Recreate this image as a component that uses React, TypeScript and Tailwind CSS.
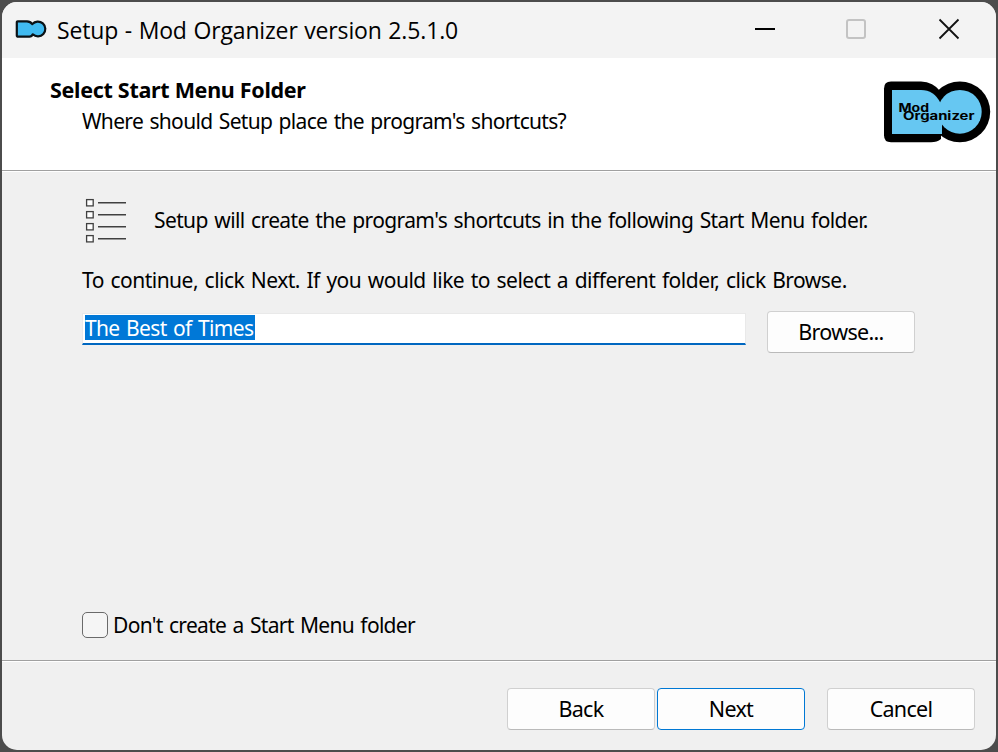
import type { ReactNode } from "react";

function WindowIcon() {
  return (
    <svg className="block" width="32" height="20" viewBox="0 0 32 20">
      <path
        d="M2.8 1.300H12Q15.300 1.400 17.300 4.100A7.400 7.400 0 1 1 17.800 14.300Q16.800 16.600 14.500 16.600H3.100Q1.800 16.600 1.800 15.500V2.400Q1.800 1.300 2.800 1.300Z"
        fill="#41bbf1"
        stroke="#0b1216"
        strokeWidth="2.200"
        strokeLinejoin="round"
      />
    </svg>
  );
}

function Logo() {
  return (
    <svg className="block" width="108" height="64" viewBox="0 0 108 64">
      <path
        d="M8 1.500H38Q50 1.500 58 12V59Q54 62.200 48 62.200H8Q1 62.200 1 55.200V8.500Q1 1.500 8 1.500Z"
        fill="#000"
      />
      <circle cx="76.800" cy="31.800" r="30.400" fill="#000" />
      <path d="M9 10H38Q51 10 57.500 23L59 40V54H9Z" fill="#66c7f2" />
      <circle cx="76.800" cy="31.800" r="21.900" fill="#66c7f2" />
      <g
        fontFamily="Inter, 'Liberation Sans', sans-serif"
        fontWeight="700"
        fontSize="11.500"
        fill="#000"
      >
        <text x="15.500" y="31.500" textLength="30.500" lengthAdjust="spacingAndGlyphs">Mod</text>
        <text x="20" y="40.400" textLength="71.500" lengthAdjust="spacingAndGlyphs">Organizer</text>
      </g>
    </svg>
  );
}

function ListIcon() {
  return (
    <svg className="block" width="42" height="46" viewBox="0 0 42 46" fill="none">
      {[0, 12, 24, 36].map((y) => (
        <g key={y} stroke="#404040">
          <rect x="1.600" y={1.6 + y} width="6.600" height="6.300" fill="#fff" strokeWidth="1.300" />
          <path d={`M13 ${4.7 + y}H41`} strokeWidth="1.400" />
        </g>
      ))}
    </svg>
  );
}

function Button({ children, primary = false }: { children: ReactNode; primary?: boolean }) {
  return (
    <button
      className={`h-[42px] w-[148px] shrink-0 rounded-[4px] border bg-[#fdfdfd] text-center text-[21.5px] leading-[40px] tracking-[-0.7px] ${
        primary ? "border-[#0078d4]" : "border-[#d0d0d0] border-b-[#bababa]"
      }`}
    >
      {children}
    </button>
  );
}

export default function App() {
  return (
    <div className="h-[752px] w-[998px] overflow-hidden bg-[#4c4c4c] p-[2px] font-['Noto_Sans','Liberation_Sans',sans-serif] text-[21px] leading-[26px] text-black">
      <div className="flex h-[748px] w-[994px] flex-col overflow-hidden rounded-[15px] bg-[#f0f0f0]">
        <header className="flex h-14 shrink-0 items-center bg-[#f3f3f3] pl-[13px]">
          <WindowIcon />
          <h1 className="ml-[10px] whitespace-nowrap font-['Open_Sans','Noto_Sans',sans-serif] text-[23px] tracking-[-0.15px] [word-spacing:0.8px]">
            Setup - Mod Organizer version 2.5.1.0
          </h1>
          <svg className="mb-[2px] ml-auto mr-[36px] block shrink-0" width="206" height="22" viewBox="0 0 206 22" fill="none">
            <path d="M1 11H21" stroke="#000" strokeWidth="2" />
            <rect x="93" y="2" width="18" height="18" rx="2" stroke="#c3c3c3" strokeWidth="2" />
            <path d="M185.500 1.500L204.500 20.500M204.500 1.500L185.500 20.500" stroke="#111" strokeWidth="1.800" />
          </svg>
        </header>

        <section className="flex h-[113px] shrink-0 justify-between border-b border-[#a0a0a0] bg-white pl-12 pr-[5px]">
          <div className="whitespace-nowrap pt-[19px]">
            <h2 className="text-[21.5px] font-bold tracking-[-0.3px]">Select Start Menu Folder</h2>
            <p className="mt-[5px] pl-8 tracking-[-0.68px] [word-spacing:1.6px]">
              Where should Setup place the program's shortcuts?
            </p>
          </div>
          <div className="pt-[22px]">
            <Logo />
          </div>
        </section>

        <main className="flex h-[490px] shrink-0 flex-col border-b border-t border-b-[#a0a0a0] border-t-white pl-20">
          <div className="flex h-[52px] pl-[3px] pt-[26px]">
            <ListIcon />
            <p className="ml-[27px] mt-[9px] whitespace-nowrap tracking-[-0.61px] [word-spacing:1.6px]">
              Setup will create the program's shortcuts in the following Start Menu folder.
            </p>
          </div>
          <p className="mt-[43px] whitespace-nowrap tracking-[-0.51px] [word-spacing:1.6px]">
            To continue, click Next. If you would like to select a different folder, click Browse.
          </p>
          <div className="mt-[18px] flex">
            <div className="mt-[2px] h-[32px] w-[664px] border border-b-2 border-[#e9e9e9] border-b-[#0067c0] bg-white pl-[2px] pt-px">
              <span className="block h-[25px] w-[170px] whitespace-nowrap bg-[#0078d7] leading-[27px] tracking-[-0.64px] text-white [word-spacing:1.6px]">
                The Best of Times
              </span>
            </div>
            <div className="ml-[21px]">
              <Button>Browse...</Button>
            </div>
          </div>
          <label className="mb-[22px] mt-auto flex items-center whitespace-nowrap tracking-[-0.7px] [word-spacing:1.6px]">
            <span className="mr-[5px] size-[26px] rounded-[5px] border-[1.5px] border-[#6a6a6a] bg-[#f5f5f5]" />
            Don't create a Start Menu folder
          </label>
        </main>

        <footer className="flex flex-1 justify-end border-t border-white pr-[21px] pt-[26px]">
          <Button>Back</Button>
          <div className="ml-[2px] mr-[22px]">
            <Button primary>Next</Button>
          </div>
          <Button>Cancel</Button>
        </footer>
      </div>
    </div>
  );
}
